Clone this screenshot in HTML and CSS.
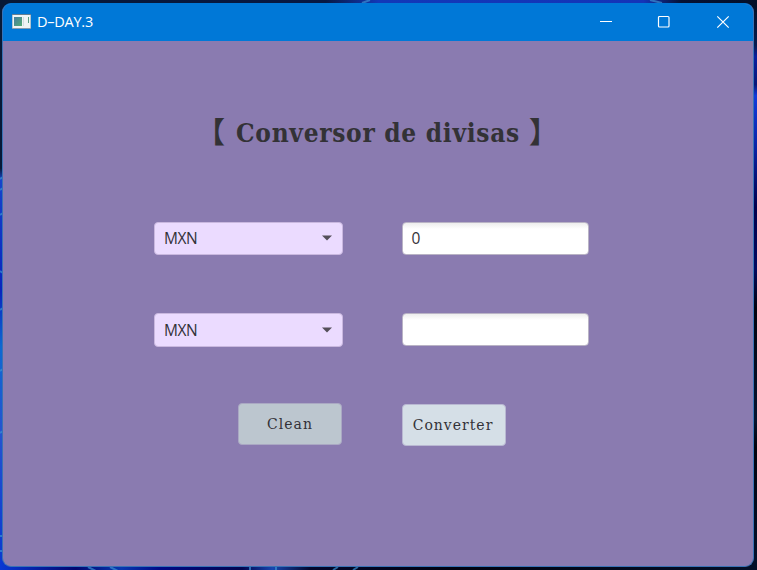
FILE: index.html
```html
<!DOCTYPE html>
<html lang="es">
<head>
<meta charset="utf-8">
<title>D–DAY.3</title>
<link rel="stylesheet" href="styles.css">
</head>
<body>
<svg class="wallpaper" width="757" height="570" aria-hidden="true">
  <defs>
    <linearGradient id="top"><stop offset="0" stop-color="#071936"/><stop offset=".43" stop-color="#071943"/><stop offset=".5" stop-color="#1238b8"/><stop offset=".85" stop-color="#1434b8"/><stop offset=".9" stop-color="#051233"/><stop offset="1" stop-color="#03102a"/></linearGradient>
    <linearGradient id="left" x2="0" y2="1"><stop offset="0" stop-color="#071936"/><stop offset=".28" stop-color="#071936"/><stop offset=".3" stop-color="#1644cc"/><stop offset=".5" stop-color="#0825bd"/><stop offset=".6" stop-color="#0d68d2"/><stop offset=".75" stop-color="#2454d0"/><stop offset="1" stop-color="#0838d0"/></linearGradient>
    <linearGradient id="right" x2="0" y2="1"><stop offset="0" stop-color="#04122e"/><stop offset=".06" stop-color="#061b50"/><stop offset=".08" stop-color="#0820a0"/><stop offset=".13" stop-color="#061878"/><stop offset=".15" stop-color="#123cdc"/><stop offset=".24" stop-color="#0925a8"/><stop offset=".35" stop-color="#00004c"/><stop offset=".46" stop-color="#020a60"/><stop offset=".53" stop-color="#00030e"/><stop offset=".73" stop-color="#051430"/><stop offset=".78" stop-color="#00030d"/><stop offset="1" stop-color="#03122e"/></linearGradient>
    <linearGradient id="bottom"><stop offset="0" stop-color="#0938d4"/><stop offset=".1" stop-color="#020770"/><stop offset=".16" stop-color="#0838b0"/><stop offset=".21" stop-color="#000a88"/><stop offset=".32" stop-color="#020650"/><stop offset=".36" stop-color="#1746b0"/><stop offset=".41" stop-color="#02072c"/><stop offset=".6" stop-color="#000310"/><stop offset="1" stop-color="#031028"/></linearGradient>
  </defs>
  <rect width="757" height="20" fill="url(#top)"/>
  <rect y="12" width="20" height="558" fill="url(#left)"/>
  <rect x="740" y="12" width="17" height="558" fill="url(#right)"/>
  <rect y="560" width="757" height="10" fill="url(#bottom)"/>
  <g stroke="#3c91d2" stroke-width="2" opacity=".7">
    <path d="M0 179l3-2M0 190l3-2M0 215l3-2M0 271l3 2M0 310l3-2M0 371l3-2M0 433l3-2M0 536h3M0 551h3M88 567l8 4M110 567l8 4M250 567v3M276 567v3M333 570l5-3M353 570l5-3M362 3l8-3M650 0l12 3"/>
  </g>
</svg>
<main class="window">
  <header class="titlebar">
    <svg class="app-icon" width="19" height="16" viewBox="0 0 19 16">
      <defs><linearGradient id="screen" x2="1" y2="1"><stop stop-color="#477da0"/><stop offset="1" stop-color="#55ac75"/></linearGradient></defs>
      <rect x=".5" y=".5" width="18" height="14" fill="#f1f4f5" stroke="#b2c5d2"/>
      <path d="M0 .5h19" stroke="#667e91"/><path d="M0 14.5h19" stroke="#879caf"/>
      <rect x="2" y="3" width="8" height="9" fill="url(#screen)"/>
      <path d="M11.5 3v9" stroke="#d3dde0"/><path d="M16.5 3v6" stroke="#5b9f83"/>
    </svg>
    <span class="caption">D–DAY.3</span>
    <svg class="controls" width="134" height="16" viewBox="0 0 134 16" fill="none" stroke="#fff" stroke-width="1.2">
      <path d="M1 7.5h12"/><rect x="59.5" y="2.5" width="10.5" height="10.5" rx="1"/><path d="M118.3 2.3l11.4 11.4M129.7 2.3L118.3 13.7"/>
    </svg>
  </header>
  <section class="content">
    <h1><span class="bracket">【</span><span class="heading">Conversor de divisas</span><span class="bracket">】</span></h1>
    <div class="row">
      <div class="select">MXN<svg width="10" height="6" viewBox="0 0 10 6"><path d="M0 .5h10L5 5.5z" fill="#544f59"/></svg></div>
      <div class="field">0</div>
    </div>
    <div class="row second">
      <div class="select">MXN<svg width="10" height="6" viewBox="0 0 10 6"><path d="M0 .5h10L5 5.5z" fill="#544f59"/></svg></div>
      <div class="field"></div>
    </div>
    <div class="actions">
      <button class="clean">Clean</button>
      <button class="convert">Converter</button>
    </div>
  </section>
</main>
</body>
</html>
```
FILE: styles.css
```css
* { box-sizing: border-box; }
body {
  margin: 0;
  width: 757px;
  height: 570px;
  padding: 3px 3px 3px 2px;
  overflow: hidden;
  background: #071936;
  font-family: "Open Sans", "Noto Sans", sans-serif;
  color: #333238;
}
.wallpaper { position: absolute; inset: 0; z-index: -1; }
.window {
  height: 564px;
  border: 1px solid #3972b5;
  border-top-color: #0078d7;
  border-radius: 9px;
  overflow: hidden;
  background: #8a7bb0;
}
.titlebar {
  display: flex;
  align-items: center;
  height: 37px;
  padding: 0 20px 1px 9px;
  background: #0078d7;
  color: #fff;
}
.caption { margin-left: 6px; font-size: 14.5px; letter-spacing: -.25px; line-height: 20px; }
.controls { margin-left: auto; }
.content { padding-top: 72px; }
h1 {
  display: flex;
  align-items: center;
  height: 38px;
  margin: 0 0 0 193px;
  color: #333236;
  font-weight: 700;
}
.bracket { width: 29px; padding-bottom: 4px; font: 700 29px/38px "Noto Sans CJK JP", sans-serif; }
.heading {
  width: 284px;
  margin: 0 10px 0 11px;
  padding-top: 1px;
  font: 700 26px/38px "DejaVu Serif Condensed", "DejaVu Serif", serif;
  letter-spacing: .7px;
  white-space: nowrap;
}
.heading + .bracket { margin-left: -1px; }
.row { display: flex; gap: 59px; margin: 71px 0 0 151px; height: 33px; }
.second { margin-top: 58px; height: 34px; }
.select {
  display: flex;
  align-items: center;
  justify-content: space-between;
  width: 188.5px;
  padding: 0 10px 1px 9px;
  border: 1px solid #c9b8df;
  border-radius: 4px;
  background: #ebdbff;
  font-size: 15.5px;
  letter-spacing: -.4px;
}
.field {
  width: 187.5px;
  height: 33px;
  padding: 0 9px;
  border: 1px solid #b9b3c5;
  border-radius: 4px;
  background: linear-gradient(#ededed, #fff 6px);
  font-size: 15.5px;
  line-height: 31px;
}
.second .select { padding-bottom: 1px; }
.actions { display: flex; gap: 60px; margin: 56px 0 0 235px; }
button {
  width: 104px;
  height: 42px;
  padding: 0;
  border: 1px solid #aaa8c3;
  border-radius: 4px;
  background: #bcc6cf;
  color: #333238;
  font: 14px/40px "DejaVu Serif", serif;
  letter-spacing: 1px;
}
.convert { margin-top: 1px; padding-right: 2px; background: #d5dfe7; border-color: #b9b8d2; }
```
